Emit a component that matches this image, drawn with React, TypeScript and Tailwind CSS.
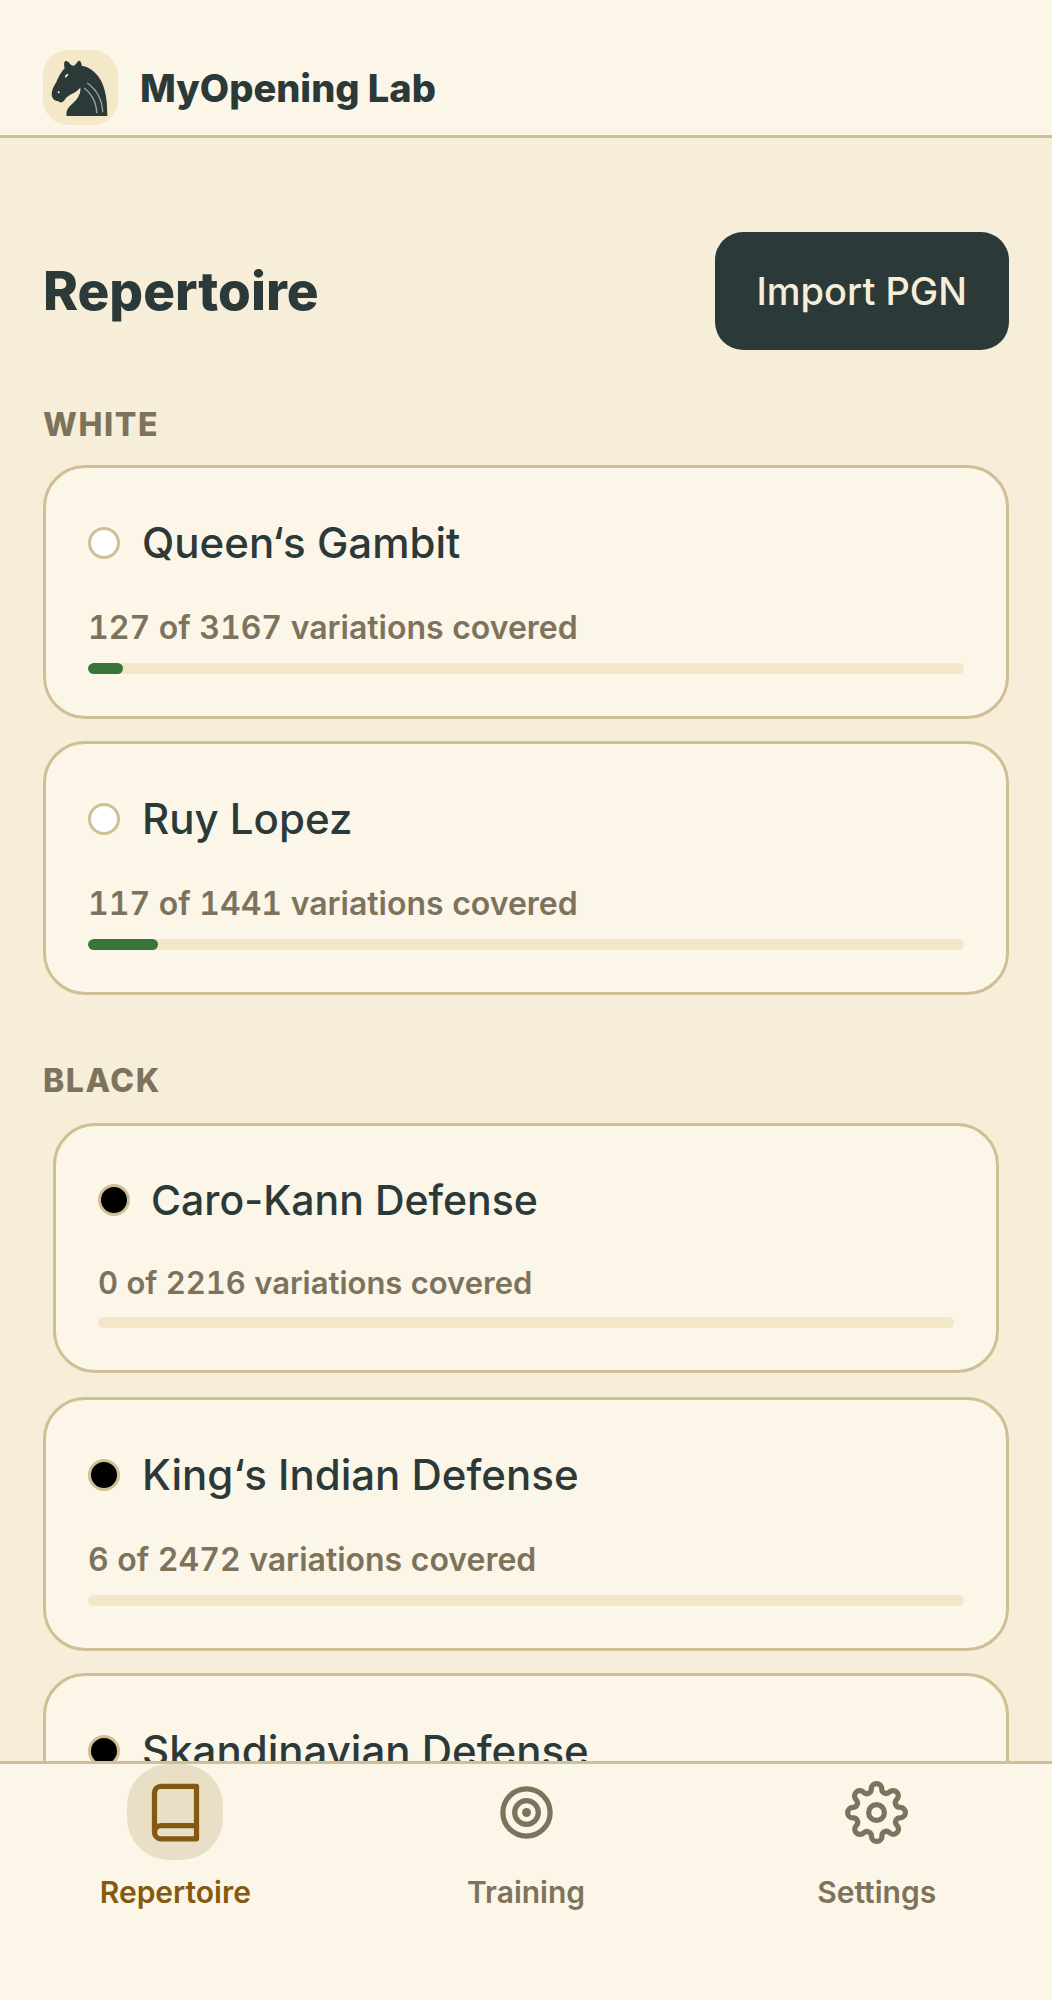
import type { ReactNode } from "react";
import clsx from "clsx";
import { FiBook, FiSettings } from "react-icons/fi";

type Opening = {
  name: string;
  side: "white" | "black";
  progress?: { covered: number; total: number };
  pressed?: boolean;
};

const whiteOpenings: Opening[] = [
  { name: "Queen‘s Gambit", side: "white", progress: { covered: 127, total: 3167 } },
  { name: "Ruy Lopez", side: "white", progress: { covered: 117, total: 1441 } },
];

const blackOpenings: Opening[] = [
  { name: "Caro-Kann Defense", side: "black", progress: { covered: 0, total: 2216 }, pressed: true },
  { name: "King‘s Indian Defense", side: "black", progress: { covered: 6, total: 2472 } },
  { name: "Skandinavian Defense", side: "black" },
];

const KnightLogo = () => (
  <svg viewBox="0 0 225 225" className="size-[75px] shrink-0" aria-hidden="true">
    <rect width="225" height="225" rx="76" fill="#f3e8c8" />
    <g transform="translate(-39 -30)">
      <path
        fill="#2b3939"
        d="M110 228H232C232 196 230 158 215 126C203 101 183 82 155 77C155 68 151 61 147 62C142 63 139 72 134 76Q129 78 124 76C118 68 111 61 106 63C101 66 102 76 104 85C94 94 86 111 79 126C73 137 65 148 65 162C65 175 73 183 84 183C88 189 98 189 103 181C110 169 119 165 130 160C140 155 146 148 151 143C153 155 147 168 139 179C131 189 119 196 113 207C109 214 109 221 110 228Z"
      />
      <path
        fill="none"
        stroke="#a0a49c"
        strokeWidth="4"
        d="M163 144C184 160 200 188 200 219M172 129C198 148 217 178 218 217"
      />
      <path fill="#fcf6e8" d="M105 114C104 107 108 102 115 102C115 107 111 110 105 114Z" />
      <circle cx="86" cy="157" r="3" fill="#fcf6e8" />
    </g>
  </svg>
);

const TargetIcon = () => (
  <svg viewBox="0 0 24 24" className="size-[63px]" fill="none" stroke="currentColor" strokeWidth="2" aria-hidden="true">
    <circle cx="12" cy="12" r="9" />
    <circle cx="12" cy="12" r="4.5" />
    <circle cx="12" cy="12" r="1.7" fill="currentColor" stroke="none" />
  </svg>
);

const OpeningCard = ({ name, side, progress, pressed }: Opening) => {
  const percent = progress ? Math.floor((progress.covered / progress.total) * 100) : 0;
  return (
    <li className={clsx(pressed && "px-[10px] py-[2px]")}>
      <button
        type="button"
        className="flex w-full flex-col rounded-[42px] border-3 border-[#cfbf94] bg-[#fcf6e8] px-[42px] pt-[43px] pb-[42px] text-left"
      >
        <span className={clsx("flex items-center", pressed ? "gap-[21px]" : "gap-[22px]")}>
          <span
            className={clsx(
              "size-8 shrink-0 rounded-full border-3 border-[#cfbf94]",
              side === "white" ? "bg-white" : "bg-black"
            )}
          />
          <span
            className={clsx(
              "font-medium text-[#2b3939]",
              pressed ? "text-[41px] leading-[62px]" : "text-[42px] leading-[64px]"
            )}
          >
            {name}
          </span>
        </span>
        {progress && (
          <>
            <span
              className={clsx(
                "mt-[29px] font-semibold text-[#7d735d] tabular-nums",
                pressed ? "text-[31px] leading-[46px]" : "text-[32px] leading-[48px]"
              )}
            >
              {progress.covered} of {progress.total} variations covered
            </span>
            <span className="mt-[11px] block h-[11px] w-full overflow-hidden rounded-full bg-[#f2e7c9]">
              <span className="block h-full rounded-full bg-[#37753b]" style={{ width: `${percent}%` }} />
            </span>
          </>
        )}
      </button>
    </li>
  );
};

const Section = ({ title, openings }: { title: string; openings: Opening[] }) => (
  <section>
    <h2 className="text-[32px] leading-[48px] font-extrabold tracking-wider text-[#7d735d] uppercase">{title}</h2>
    <ul className="mt-4 flex flex-col gap-[22px]">
      {openings.map((opening) => (
        <OpeningCard key={opening.name} {...opening} />
      ))}
    </ul>
  </section>
);

const NavItem = ({ label, active, children }: { label: string; active?: boolean; children: ReactNode }) => (
  <a
    href={`#${label.toLowerCase()}`}
    aria-current={active ? "page" : undefined}
    className={clsx(
      "flex flex-1 flex-col items-center gap-[10px] font-semibold",
      active ? "text-[#85590f]" : "text-[#7d735d]"
    )}
  >
    <span className={clsx("flex size-24 items-center justify-center rounded-[42px]", active && "bg-[#e8dfc6]")}>
      {children}
    </span>
    <span className="text-[30px] leading-[44px]">{label}</span>
  </a>
);

export default function App() {
  return (
    <div className="flex h-screen flex-col bg-[#f7eed9] font-['Inter','Liberation_Sans',sans-serif]">
      <header className="flex shrink-0 items-center gap-[22px] border-b-3 border-[#cfbf94] bg-[#fcf6e8] px-[43px] pt-[50px] pb-[10px]">
        <KnightLogo />
        <span className="text-[38px] leading-[56px] font-extrabold text-[#2b3939]">MyOpening Lab</span>
      </header>

      <main className="min-h-0 flex-1 overflow-hidden px-[43px] pt-[94px]">
        <div className="flex items-center justify-between">
          <h1 className="text-[53px] leading-[64px] font-extrabold text-[#2b3939]">Repertoire</h1>
          <button
            type="button"
            className="rounded-[28px] bg-[#2b3939] px-[42px] py-[31px] text-[38px] leading-[56px] font-medium text-[#f7eed9]"
          >
            Import PGN
          </button>
        </div>
        <div className="mt-[51px] flex flex-col gap-[62px]">
          <Section title="White" openings={whiteOpenings} />
          <Section title="Black" openings={blackOpenings} />
        </div>
      </main>

      <nav className="flex shrink-0 border-t-3 border-[#cfbf94] bg-[#fcf6e8] pb-[86px]">
        <NavItem label="Repertoire" active>
          <FiBook className="size-[63px]" />
        </NavItem>
        <NavItem label="Training">
          <TargetIcon />
        </NavItem>
        <NavItem label="Settings">
          <FiSettings className="size-[63px]" />
        </NavItem>
      </nav>
    </div>
  );
}
